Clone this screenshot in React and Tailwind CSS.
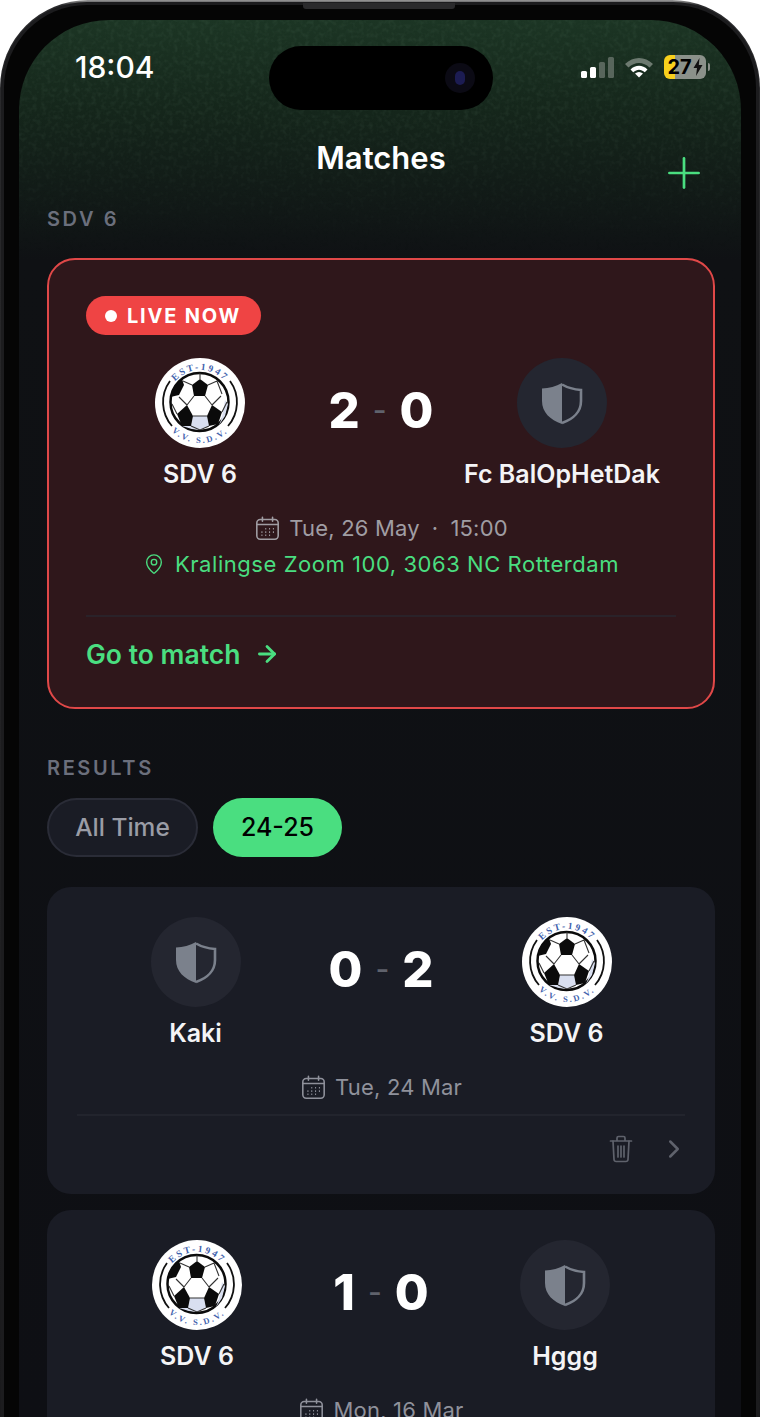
import React, { useId } from 'react';
import { ArrowRight, ChevronRight, MapPin, Plus } from 'lucide-react';

const CalendarIcon = ({ className }) => (
  <svg viewBox="0 0 24 24" fill="none" stroke="currentColor" strokeWidth="1.4" className={className}>
    <rect x="2.5" y="4" width="19" height="17.5" rx="3" />
    <path d="M2.500 8.500h19M7.500 2v3.500M16.500 2v3.500" strokeLinecap="round" />
    <path d="M10 12.200h.9M13.400 12.200h.9M16.800 12.200h.9M6.600 15.200h.9M10 15.200h.9M13.400 15.200h.9M16.800 15.200h.9M6.600 18h.9M10 18h.9M13.400 18h.9" strokeWidth="1.4" />
  </svg>
);

const TrashIcon = ({ className }) => (
  <svg viewBox="0 0 24 28" fill="none" stroke="currentColor" strokeWidth="1.7" strokeLinecap="round" strokeLinejoin="round" className={className}>
    <path d="M1.500 6h21M8 6V3a1.500 1.500 0 0 1 1.500-1.500h5A1.500 1.500 0 0 1 16 3v3" />
    <path d="M4 6 5 24.500A2.200 2.200 0 0 0 7.200 26.500h9.600a2.200 2.200 0 0 0 2.200-2L20 6" />
    <path d="M9 11v11M12 11v11M15 11v11" />
  </svg>
);

const ShieldBadge = () => (
  <div className="w-[90px] h-[90px] rounded-full bg-[#242630] flex items-center justify-center">
    <svg viewBox="0 0 44 44" className="w-[44px] h-[44px]">
      <path d="M22 2 C16 5.500 9 7 2 7.500 V20 C2 31 10 39 22 43 Z" fill="#7b818c" />
      <path d="M22 3.500 C28 7 34 8.500 41 9 V20 C41 30 34 38 22 42" fill="none" stroke="#7b818c" strokeWidth="2.600" />
    </svg>
  </div>
);

const ClubLogo = () => {
  const id = useId();
  return (
    <svg viewBox="0 0 90 90" className="w-[90px] h-[90px]">
      <defs>
        <path id={`${id}top`} d="M12 45 A33 33 0 0 1 78 45" />
        <path id={`${id}bottom`} d="M5 45 A40 40 0 0 0 85 45" />
      </defs>
      <circle cx="45" cy="45" r="45" fill="#fff" />
      <path d="M15 23 A36 36 0 0 0 17 68 M75 23 A36 36 0 0 1 73 68" fill="none" stroke="#111" strokeWidth="1.800" />
      <circle cx="44.500" cy="44" r="29" fill="#fff" stroke="#0b0b0b" strokeWidth="2.500" />
      {/* shaded bottom of the ball */}
      <path d="M38 58 L52 58 L54 68 L45 72 L36 68 Z" fill="#d9dff0" />
      <path d="M66 62 L68 54 L70 42 L73 46 L70 58 L64 67 Z" fill="#d9dff0" />
      <path d="M27 68 L36 68 L45 72 L37 71 Z" fill="#d9dff0" />
      {/* seams */}
      <path d="M45 21 V15 M37 27 L28 23 M53 27 L62 23 M39 38 L32 47 M50 38 L57 47 M38 58 H52 M54 68 L45 72 L36 68 M32 47 L24 39 M57 47 L66 38 M62 23 L67 36 M22 56 L17 46 M67 54 L72 44" fill="none" stroke="#333" strokeWidth="1.100" />
      {/* black panels */}
      <path d="M45 21 L53 27 L50 38 L39 38 L37 27 Z" fill="#0b0b0b" />
      <path d="M32 47 L38 58 L36 68 L27 68 L22 56 Z" fill="#0b0b0b" />
      <path d="M57 47 L52 58 L54 68 L63 66 L67 54 Z" fill="#0b0b0b" />
      <path d="M27 21 L17 32 L15.500 39 L24 37 L29 27 Z" fill="#0b0b0b" />
      <path d="M36 72 L54 72 L48 73.500 L41 73.500 Z" fill="#0b0b0b" />
      <text fontFamily="'Liberation Serif', serif" fontWeight="700" fontSize="9.500" fill="#3f62ad" letterSpacing="2.200">
        <textPath href={`#${id}top`} startOffset="50%" textAnchor="middle">EST-1947</textPath>
      </text>
      <text fontFamily="'Liberation Serif', serif" fontWeight="700" fontSize="8.500" fill="#3f62ad" letterSpacing="2.200">
        <textPath href={`#${id}bottom`} startOffset="50%" textAnchor="middle">V.V. S.D.V.</textPath>
      </text>
    </svg>
  );
};

const Team = ({ name, logo }) => (
  <div className="w-[200px] flex flex-col items-center">
    {logo ? <ClubLogo /> : <ShieldBadge />}
    <div className="mt-[11px] text-[25px] leading-[30px] font-semibold text-[#f4f4f6] whitespace-nowrap">{name}</div>
  </div>
);

const Score = ({ home, away, width }) => (
  <div className={`${width} h-[90px] pt-[14px] flex items-center justify-center text-[49px] leading-none font-extrabold text-white`}>
    <span>{home}</span>
    <span className="mx-[13px] text-[30px] font-medium text-[#5f626c]">-</span>
    <span>{away}</span>
  </div>
);

const SectionLabel = ({ children }) => (
  <div className="text-[20px] leading-[24px] font-semibold tracking-[2.600px] text-[#6b6f7c]">{children}</div>
);

const ResultCard = ({ home, away, homeLogo, awayLogo, date, width }) => (
  <div className="rounded-[24px] bg-[#1a1c25] pt-[30px]">
    <div className="flex justify-center">
      <Team name={home} logo={homeLogo} />
      <Score home={homeLogo ? 1 : 0} away={homeLogo ? 0 : 2} width={width} />
      <Team name={away} logo={awayLogo} />
    </div>
    <div className="mt-[24px] flex items-center justify-center gap-[8px] text-[22px] leading-[30px] tracking-[0.200px] text-[#8f919b]">
      <CalendarIcon className="w-[27px] h-[27px]" />
      <span>{date}</span>
    </div>
    <div className="mt-[12px] mx-[30px] h-[2px] bg-[#22242d]" />
    <div className="h-[78px] pb-[12px] pr-[26px] flex items-center justify-end gap-[26px] text-[#5f626c]">
      <TrashIcon className="w-[24px] h-[28px]" />
      <ChevronRight className="w-[30px] h-[30px]" strokeWidth={2} />
    </div>
  </div>
);

export default function App() {
  return (
    <div className="w-[760px] h-[1417px] overflow-hidden bg-white font-['Inter',sans-serif]">
      <div className="relative h-[1417px] rounded-t-[88px] bg-[linear-gradient(180deg,#9a9a9a_0,#2a2a2c_5px,#1a1a1c_100%)] pt-[2px] px-[1px]">
        <div className="h-full rounded-t-[86px] border-[3px] border-b-0 border-[#1c1c1e] bg-[#050505] pt-[15px] px-[15px]">
          <div className="relative h-full rounded-t-[90px] overflow-hidden bg-[linear-gradient(180deg,#1c3524_0,#15261b_90px,#0f1114_240px,#0e0f14_100%)] pl-[28px] pr-[26px]">
            {/* leather grain over the header */}
            <svg className="absolute left-0 top-0 w-full h-[240px] opacity-[0.18] [mask-image:linear-gradient(180deg,#000_40%,transparent_100%)]">
              <filter id="grain">
                <feTurbulence type="fractalNoise" baseFrequency="0.22" numOctaves="2" seed="4" />
                <feColorMatrix values="0 0 0 0 0.25  0 0 0 0 0.42  0 0 0 0 0.3  0 0 0 1.1 -0.45" />
              </filter>
              <rect width="100%" height="100%" filter="url(#grain)" />
            </svg>

            {/* dynamic island */}
            <div className="absolute left-[250px] top-[26px] w-[224px] h-[64px] rounded-full bg-black flex items-center justify-end pr-[18px]">
              <div className="w-[30px] h-[30px] rounded-full bg-[#0b0a14] flex items-center justify-center">
                <div className="w-[10px] h-[14px] rounded-full bg-[#1c1c52]" />
              </div>
            </div>

            {/* status bar */}
            <div className="relative flex items-center justify-between h-[94px] pl-[28px] pr-[5px]">
              <span className="text-[30px] leading-none font-medium text-white">18:04</span>
              <div className="flex items-center">
                <div className="flex items-end gap-[3px] h-[22px]">
                  <div className="w-[6px] h-[7px] rounded-[1.500px] bg-white" />
                  <div className="w-[6px] h-[11px] rounded-[1.500px] bg-white" />
                  <div className="w-[6px] h-[16px] rounded-[1.500px] bg-[#58665c]" />
                  <div className="w-[6px] h-[21px] rounded-[1.500px] bg-[#58665c]" />
                </div>
                <svg viewBox="0 0 30 22" className="ml-[10px] w-[30px] h-[22px]">
                  <path d="M1 8 C9 0 21 0 29 8 L25.500 11.500 C19.500 5.500 10.500 5.500 4.500 11.500 Z" fill="#6d7a70" />
                  <path d="M6.500 13.500 C11.500 8.500 18.500 8.500 23.500 13.500 L20.800 16.200 C17 12.800 13 12.800 9.200 16.200 Z" fill="#fff" />
                  <path d="M11 17.500 C13.500 15.500 16.500 15.500 19 17.500 L15 21.500 Z" fill="#fff" />
                </svg>
                <div className="ml-[10px] flex items-center gap-[2px]">
                  <div className="w-[42px] h-[24px] rounded-[6px] bg-[linear-gradient(90deg,#f8d01c_26%,#8b918a_26%)] flex items-center justify-center gap-[1px] text-[20px] font-bold text-black">
                    <span>27</span>
                    <svg viewBox="0 0 10 18" className="w-[10px] h-[18px]">
                      <path d="M6.500 0 L0.500 10 H4 L3 18 L9.500 7 H5.800 Z" fill="#111" />
                    </svg>
                  </div>
                  <div className="w-[2px] h-[8px] rounded-r-full bg-[#8b918a]" />
                </div>
              </div>
            </div>

            {/* header */}
            <div className="relative h-[93px]">
              <div className="pt-[25px] text-center text-[31px] leading-[38px] font-semibold text-white">Matches</div>
              <Plus className="absolute right-[6px] top-[34px] w-[50px] h-[50px] text-[#4ade80]" strokeWidth={1.300} />
            </div>

            <div className="relative">
              <SectionLabel>SDV 6</SectionLabel>
            </div>

            {/* live match */}
            <div className="relative mt-[27px] h-[451px] rounded-[28px] border-2 border-[#e04848] bg-[#2f171b] pt-[36px] px-[37px]">
              <div className="w-fit h-[39px] rounded-full bg-[#ef4444] pl-[19px] pr-[20px] flex items-center gap-[10px] text-white">
                <div className="w-[12px] h-[12px] rounded-full bg-white" />
                <span className="text-[20px] font-bold tracking-[1.800px]">LIVE NOW</span>
              </div>
              <div className="mt-[23px] flex justify-center">
                <Team name="SDV 6" logo />
                <Score home={2} away={0} width="w-[162px]" />
                <Team name="Fc BalOpHetDak" />
              </div>
              <div className="mt-[21px] flex items-center justify-center gap-[8px] text-[22px] leading-[36px] tracking-[0.200px] text-[#a09da3]">
                <CalendarIcon className="w-[27px] h-[27px]" />
                <span>Tue, 26 May</span>
                <span className="mx-[4px]">·</span>
                <span>15:00</span>
              </div>
              <div className="flex items-center justify-center gap-[10px] text-[22px] leading-[36px] tracking-[0.550px] text-[#4ade80]">
                <MapPin className="w-[22px] h-[24px]" strokeWidth={1.500} />
                <span>Kralingse Zoom 100, 3063 NC Rotterdam</span>
              </div>
              <div className="mt-[33px] h-[2px] bg-[#2a2229]" />
              <div className="mt-[19px] flex items-center gap-[14px] text-[26.500px] leading-[36px] font-semibold text-[#4ade80]">
                <span>Go to match</span>
                <ArrowRight className="w-[26px] h-[26px]" strokeWidth={2.600} />
              </div>
            </div>

            {/* results */}
            <div className="mt-[47px]">
              <SectionLabel>RESULTS</SectionLabel>
            </div>
            <div className="mt-[18px] flex gap-[15px]">
              <div className="w-[151px] h-[59px] rounded-full border-2 border-[#2a2c37] bg-[#1a1c25] flex items-center justify-center text-[24.500px] font-medium text-[#9a9ca6]">All Time</div>
              <div className="w-[129px] h-[59px] rounded-full bg-[#4ade80] flex items-center justify-center text-[25px] font-medium text-black">24-25</div>
            </div>

            <div className="mt-[30px] flex flex-col gap-[16px]">
              <ResultCard home="Kaki" away="SDV 6" awayLogo date="Tue, 24 Mar" width="w-[171px]" />
              <ResultCard home="SDV 6" away="Hggg" homeLogo date="Mon, 16 Mar" width="w-[168px]" />
            </div>
          </div>
        </div>
        {/* speaker slit on the top edge */}
        <div className="absolute left-[303px] top-[3px] w-[152px] h-[6px] rounded-b-[3px] bg-[#2a2a2c]" />
      </div>
    </div>
  );
}
